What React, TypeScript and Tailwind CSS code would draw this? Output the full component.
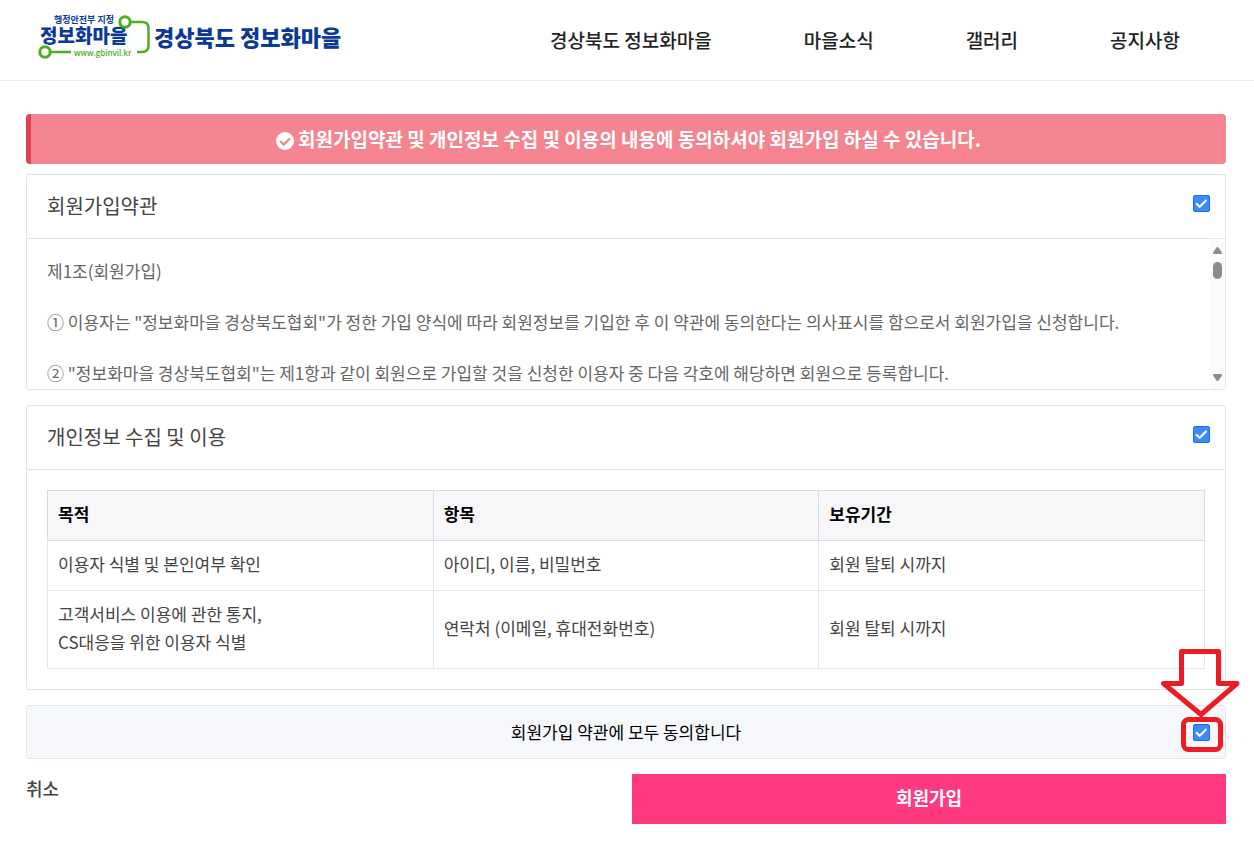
import { useState } from 'react';
import clsx from 'clsx';

const menus = ['경상북도 정보화마을', '마을소식', '갤러리', '공지사항'];

const terms = [
  '제1조(회원가입)',
  '① 이용자는 "정보화마을 경상북도협회"가 정한 가입 양식에 따라 회원정보를 기입한 후 이 약관에 동의한다는 의사표시를 함으로서 회원가입을 신청합니다.',
  '② "정보화마을 경상북도협회"는 제1항과 같이 회원으로 가입할 것을 신청한 이용자 중 다음 각호에 해당하면 회원으로 등록합니다.',
];

const privacyRows = [
  { purpose: ['이용자 식별 및 본인여부 확인'], items: '아이디, 이름, 비밀번호', period: '회원 탈퇴 시까지' },
  {
    purpose: ['고객서비스 이용에 관한 통지,', 'CS대응을 위한 이용자 식별'],
    items: '연락처 (이메일, 휴대전화번호)',
    period: '회원 탈퇴 시까지',
  },
];

function Logo() {
  return (
    <svg width="312" height="48" viewBox="0 0 312 48" role="img" aria-label="경상북도 정보화마을">
      <g fill="#0b3a96">
        <text x="22" y="9" fontSize="9" fontWeight="700">행정안전부 지정</text>
        <text x="8" y="29" fontSize="19" fontWeight="900">정보화마을</text>
        <text x="122" y="32" fontSize="22" fontWeight="900">경상북도 정보화마을</text>
      </g>
      <text x="42" y="42" fontSize="8" fontWeight="600" fill="#4caf22" className="font-['Open_Sans',sans-serif]">
        www.gbinvil.kr
      </text>
      <g fill="#fff" stroke="#4caf22" strokeWidth="3">
        <path d="M98.500 8H110Q116.500 8 116.500 14V32Q116.500 38 110 38H105" fill="none" strokeWidth="2.500" />
        <circle cx="93" cy="8" r="5.200" />
        <path d="M18.500 38H39" strokeWidth="2.500" />
        <circle cx="13" cy="38" r="5.200" />
      </g>
    </svg>
  );
}

interface CheckProps {
  id: string;
  checked: boolean;
  onChange: (v: boolean) => void;
}

function Check({ id, checked, onChange }: CheckProps) {
  return (
    <span className="grid size-[17px] shrink-0">
      <input
        id={id}
        type="checkbox"
        checked={checked}
        onChange={(e) => onChange(e.target.checked)}
        className="col-start-1 row-start-1 size-[17px] appearance-none rounded-[2px] border border-[#8f949b] bg-white checked:border-[#1a6fe8] checked:bg-[#3a8bfd]"
      />
      <svg
        viewBox="0 0 17 17"
        className={clsx('pointer-events-none col-start-1 row-start-1 size-[17px]', !checked && 'hidden')}
      >
        <path d="M3 8.300L6.700 11.800L13.500 5" fill="none" stroke="#fff" strokeWidth="2" />
      </svg>
    </span>
  );
}

function PanelHeader({ id, title, checked, onChange }: CheckProps & { title: string }) {
  return (
    <div className="flex h-16 items-start justify-between border-b border-[#dde6e8] pt-4 pr-[15px] pl-5">
      <label htmlFor={id} className="text-[20px] leading-[30px] text-[#444]">{title}</label>
      <div className="pt-1">
        <Check id={id} checked={checked} onChange={onChange} />
      </div>
    </div>
  );
}

function Pointer() {
  return (
    <svg
      width="82"
      height="105"
      viewBox="0 0 82 105"
      className="pointer-events-none absolute -top-[58px] -right-[17px]"
      fill="none"
      stroke="#ed1c24"
      strokeWidth="5"
      strokeLinejoin="round"
    >
      <path d="M21.500 35.500V3.500H58.500V35.500H77L41 66.500L3.500 35.500Z" />
      <rect x="23.500" y="71.500" width="37" height="30" rx="5" />
    </svg>
  );
}

export default function App() {
  const [agreeTerms, setAgreeTerms] = useState(true);
  const [agreePrivacy, setAgreePrivacy] = useState(true);

  const setAll = (v: boolean) => {
    setAgreeTerms(v);
    setAgreePrivacy(v);
  };

  return (
    <div className="overflow-x-hidden bg-white font-['Noto_Sans_CJK_KR',sans-serif] text-[17px] text-[#444]">
      <header className="flex h-[81px] items-start justify-between border-b border-[#ebebeb] pr-[74px] pl-8">
        <a href="#" className="pt-[14px]">
          <Logo />
        </a>
        <nav className="flex gap-[92px] pt-[26px] text-[19px] leading-7 font-medium whitespace-nowrap text-[#222]">
          {menus.map((menu) => (
            <a key={menu} href="#">{menu}</a>
          ))}
        </nav>
      </header>

      <main className="pt-[33px] pr-7 pb-11 pl-[26px]">
        <p className="flex h-[50px] items-center justify-center gap-1 rounded border-l-[5px] border-[#dc4453] bg-[#f4848f] text-[19px] font-bold text-white">
          <svg viewBox="0 0 18 18" className="mt-1 size-[18px] shrink-0">
            <circle cx="9" cy="9" r="9" fill="#fff" />
            <path d="M4 9L7.800 12.600L14 6.300" fill="none" stroke="#f4848f" strokeWidth="2.200" />
          </svg>
          회원가입약관 및 개인정보 수집 및 이용의 내용에 동의하셔야 회원가입 하실 수 있습니다.
        </p>

        <section className="mt-[10px] rounded-[3px] border border-[#dde6e8]">
          <PanelHeader id="agree-terms" title="회원가입약관" checked={agreeTerms} onChange={setAgreeTerms} />
          <div className="flex h-[150px]">
            <div className="flex-1 overflow-y-auto px-5 pt-[19px] text-[#666] [scrollbar-width:none]">
              {terms.map((line) => (
                <p key={line} className="mb-[26px] leading-[25px]">{line}</p>
              ))}
            </div>
            <div className="flex w-[15px] flex-col items-center bg-[#fbfbfb] py-2" aria-hidden="true">
              <svg viewBox="0 0 9 7" className="h-[7px] w-[9px]" fill="#8b8b8b">
                <path d="M3.500 .5Q4.500 -.5 5.500 .5L9 5.500Q9 7 8 7H1Q0 7 0 5.500Z" />
              </svg>
              <div className="mt-2 h-[17px] w-[9px] rounded-full bg-[#8b8b8b]" />
              <svg viewBox="0 0 9 7" className="mt-auto h-[7px] w-[9px] rotate-180" fill="#8b8b8b">
                <path d="M3.500 .5Q4.500 -.5 5.500 .5L9 5.500Q9 7 8 7H1Q0 7 0 5.500Z" />
              </svg>
            </div>
          </div>
        </section>

        <section className="mt-[15px] rounded-[3px] border border-[#dde6e8]">
          <PanelHeader id="agree-privacy" title="개인정보 수집 및 이용" checked={agreePrivacy} onChange={setAgreePrivacy} />
          <div className="p-5">
            <table className="w-full table-fixed border-collapse text-left leading-7">
              <thead className="bg-[#f7f7f9] text-black">
                <tr>
                  {['목적', '항목', '보유기간'].map((head) => (
                    <th key={head} className="h-[50px] border border-[#d9dbe1] px-[10px] pb-1 font-bold">{head}</th>
                  ))}
                </tr>
              </thead>
              <tbody>
                {privacyRows.map((row) => (
                  <tr key={row.items}>
                    <td className="border border-[#e5e7ec] px-[10px] pt-[9px] pb-3">
                      {row.purpose.map((line) => (
                        <span key={line} className="block">{line}</span>
                      ))}
                    </td>
                    <td className="border border-[#e5e7ec] px-[10px] pb-1">{row.items}</td>
                    <td className="border border-[#e5e7ec] px-[10px] pb-1">{row.period}</td>
                  </tr>
                ))}
              </tbody>
            </table>
          </div>
        </section>

        <div className="relative mt-[15px] flex h-[54px] items-center rounded-[3px] border border-[#e2e7ef] bg-[#f5f7fb] pr-[15px] pl-8">
          <label htmlFor="agree-all" className="flex-1 text-center text-black">
            회원가입 약관에 모두 동의합니다
          </label>
          <Check id="agree-all" checked={agreeTerms && agreePrivacy} onChange={setAll} />
          <Pointer />
        </div>

        <div className="mt-[15px] grid grid-cols-2 items-start gap-3 text-[18px] leading-7">
          <a href="#" className="justify-self-start font-medium">취소</a>
          <button type="submit" className="h-[50px] bg-[#ff3a80] pb-1 font-bold text-white">회원가입</button>
        </div>
      </main>
    </div>
  );
}
